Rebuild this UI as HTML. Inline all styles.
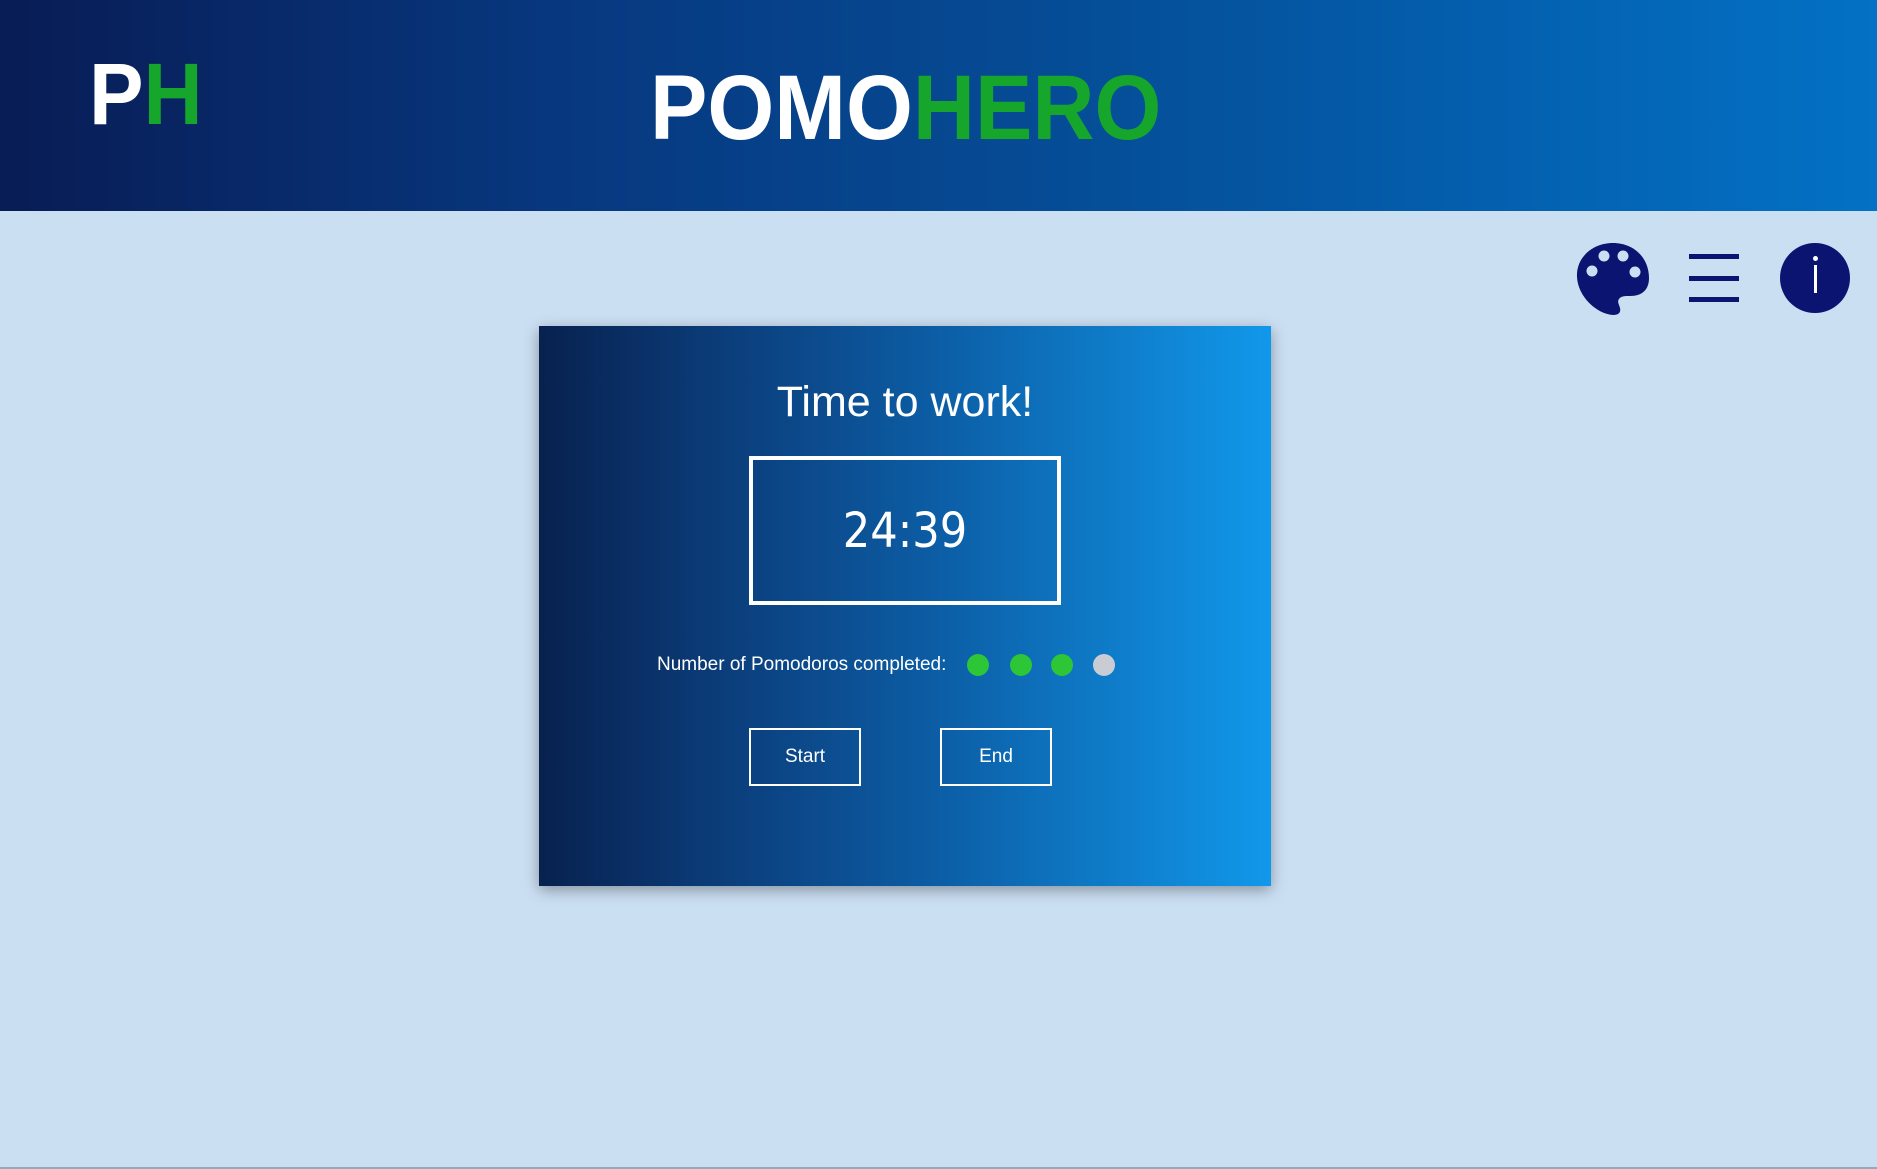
<!DOCTYPE html>
<html><head><style>
body{margin:0;width:1877px;height:1169px;background:#cbdff3;font-family:"Liberation Sans",sans-serif;position:relative;overflow:hidden}
.hdr{position:absolute;left:0;top:0;width:1877px;height:211px;background:linear-gradient(90deg,#081c55,#07387f 30%,#054f99 60%,#0371c5)}
.t{position:absolute;font-family:"Liberation Sans",sans-serif;font-weight:bold;color:#fff;white-space:nowrap;line-height:1;transform-origin:0 0}
.g{color:#17a62c}
.card{position:absolute;left:539px;top:326px;width:732px;height:560px;background:linear-gradient(90deg,#08214f,#0b3d7a 25%,#0c5ea6 55%,#1198ea);box-shadow:0 4px 14px rgba(0,0,0,.35)}
.c{position:absolute;color:#fff;text-align:center}
.btn{position:absolute;top:402px;width:108px;height:54px;border:2px solid #fff;color:#fff;font-size:19px;line-height:54px;text-align:center}
.dot{position:absolute;top:328px;width:22px;height:22px;border-radius:50%;background:#2dc637}
</style></head><body>
<div class="hdr">
<div class="t" style="left:89px;top:51px;font-size:87px;transform:scaleX(0.94)">P<span class="g">H</span></div>
<div class="t" style="left:650px;top:62px;font-size:92px;transform:scaleX(0.935)">POMO<span class="g">HERO</span></div>
</div>
<svg style="position:absolute;left:1575px;top:241px" width="76" height="76" viewBox="0 0 76 76">
<path d="M38 2C17 2 1 17 2 36c1 20 20 37 36 38 6 0 8-3 7-7-1-4-3-6-1-9 2-3 6-3 11-3 12 0 19-6 19-18C74 17 59 2 38 2z" fill="#0b1470"/>
<circle cx="17" cy="30" r="5.5" fill="#cbdff3"/><circle cx="29" cy="15" r="5.5" fill="#cbdff3"/><circle cx="48" cy="15" r="5.5" fill="#cbdff3"/><circle cx="60" cy="31" r="5.5" fill="#cbdff3"/>
</svg>
<div style="position:absolute;left:1689px;top:254px;width:50px;height:5px;background:#0b1470"></div>
<div style="position:absolute;left:1689px;top:276px;width:50px;height:5px;background:#0b1470"></div>
<div style="position:absolute;left:1689px;top:297px;width:50px;height:5px;background:#0b1470"></div>
<div style="position:absolute;left:1780px;top:243px;width:70px;height:70px;border-radius:50%;background:#0b1470"></div>
<div style="position:absolute;left:1813px;top:256px;width:5px;height:5px;border-radius:50%;background:#fff"></div>
<div style="position:absolute;left:1814px;top:265px;width:3px;height:28px;background:#fff"></div>
<div class="card">
<div class="c" style="left:0;width:732px;top:52px;font-size:43px">Time to work!</div>
<div style="position:absolute;left:210px;top:130px;width:304px;height:141px;border:4px solid #fff"></div>
<div class="c" style="left:0;width:732px;top:177px;font-size:48px;font-family:'DejaVu Sans',sans-serif;transform:scaleX(0.9)">24:39</div>
<div class="c" style="left:118px;top:328px;font-size:19px;text-align:left">Number of Pomodoros completed:</div>
<div class="dot" style="left:428px"></div><div class="dot" style="left:471px"></div><div class="dot" style="left:512px"></div><div class="dot" style="left:554px;background:#c9cdd3"></div>
<div class="btn" style="left:210px">Start</div>
<div class="btn" style="left:401px">End</div>
</div>
<div style="position:absolute;left:0;top:1167px;width:1877px;height:2px;background:#9aa8b6"></div>
</body></html>
